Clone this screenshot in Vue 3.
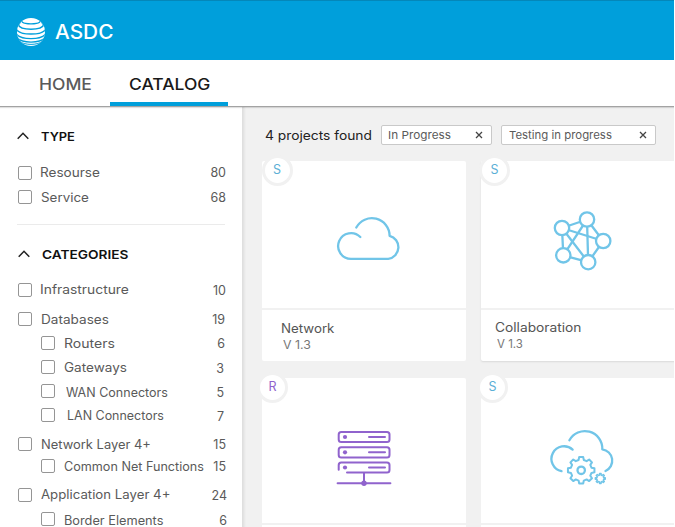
<script setup>
const types = [
  { label: 'Resourse', width: 59, x: 0, y: 0, count: '80', end: 0, cy: 0 },
  { label: 'Service', width: 47, x: 1, y: 1, count: '68', end: 0, cy: 1 },
]

const categories = [
  { label: 'Infrastructure', width: 88, x: 0, y: 0, count: '10', end: 0, cy: 1 },
  { label: 'Databases', width: 67, x: 1, y: 1, count: '19', end: 1, cy: 1, gap: 15 },
  { label: 'Routers', width: 50, x: 1, y: 1, count: '6', end: 1, cy: 1, child: true },
  { label: 'Gateways', width: 62, x: 1, y: 1, count: '3', end: 2, cy: 2, child: true },
  { label: 'WAN Connectors', width: 101, x: 3, y: 2, count: '5', end: 2, cy: 2, child: true },
  { label: 'LAN Connectors', width: 96, x: 4, y: 1, count: '7', end: 2, cy: 2, child: true },
  { label: 'Network Layer 4+', width: 109, x: 1, y: 1, count: '15', end: 0, cy: 1, gap: 15 },
  { label: 'Common Net Functions', width: 139, x: 1.5, y: 1, count: '15', end: 0, cy: 1, child: true, gap: 8 },
  { label: 'Application Layer 4+', width: 128.5, x: 1, y: 0, count: '24', end: -1, cy: 1, gap: 15 },
  { label: 'Border Elements', width: 98.5, x: 1, y: 2, count: '6', end: -1, cy: 2, child: true },
]

const cards = [
  { id: 'a', kind: 'S', icon: 'cloud', name: 'Network', nameWidth: 52.5, version: 'V 1.3', versionWidth: 27 },
  { id: 'b', kind: 'S', icon: 'mesh', name: 'Collaboration', nameWidth: 85.5, version: 'V 1.3', versionWidth: 25 },
  { id: 'c', kind: 'R', icon: 'server' },
  { id: 'd', kind: 'S', icon: 'service' },
]

const nodes = [[22, 28], [47, 19.5], [63.2, 41], [23.3, 55.3], [48.2, 62.2]]
const edges = [[0, 1], [0, 2], [0, 3], [0, 4], [1, 2], [1, 3], [1, 4], [2, 4], [3, 4]]

function gear(cx, cy, outer, inner) {
  const pts = []
  for (let i = 0; i < 8; i++) {
    const base = (i * Math.PI) / 4
    for (const [da, r] of [[-0.25, inner], [-0.15, outer], [0.15, outer], [0.25, inner]]) {
      pts.push(`${(cx + r * Math.cos(base + da)).toFixed(2)} ${(cy + r * Math.sin(base + da)).toFixed(2)}`)
    }
  }
  return `M${pts.join('L')}Z`
}

// Widens a line of text so that it spans the given width.
const vFit = {
  mounted(el, { value }) {
    const natural = el.getBoundingClientRect().width
    el.style.transform = `scaleX(${((value + 0.9) / natural).toFixed(4)})`
  },
}

const rowVars = (r) => ({
  '--gap': `${r.gap ?? 10}px`,
  '--lx': `${r.x}px`,
  '--ly': `${r.y}px`,
  '--end': `${r.end}px`,
  '--cy': `${r.cy}px`,
})
</script>

<template>
  <div class="app">
    <header class="brand">
      <svg class="globe" viewBox="0 0 28 28">
        <defs><clipPath id="ball"><circle cx="14" cy="14" r="14" /></clipPath></defs>
        <g clip-path="url(#ball)">
          <rect width="28" height="28" fill="#fff" />
          <g fill="none" stroke="#009fdb">
            <path d="M6 0C3 3.500 5 5.800 14 5.800S25 3.500 22 0" stroke-width="1.300" />
            <path d="M0 0H6L3 6L0 9ZM28 0H22L25 6L28 9Z" fill="#009fdb" stroke="none" />
            <path d="M1 6.500C3.500 12.800 24.500 12.800 27 6.500" stroke-width="1.500" />
            <path d="M-1 11C3 17.800 25 17.800 29 11" stroke-width="1.500" />
            <path d="M-1 15.500C3 22.300 25 22.300 29 15.500" stroke-width="1.400" />
            <path d="M0 19.800C5 25.500 23 25.500 28 19.800" stroke-width="1.300" />
            <path d="M3 23.600C8 27.300 20 27.300 25 23.600" stroke-width="1" />
          </g>
        </g>
      </svg>
      <span v-fit="57.5" class="fit brand-name">ASDC</span>
    </header>

    <nav class="tabs">
      <a class="tab home"><span v-fit="52" class="fit">HOME</span></a>
      <a class="tab active"><span v-fit="80.5" class="fit">CATALOG</span></a>
    </nav>

    <div class="body">
      <aside class="filters">
        <h2 class="heading">
          <svg class="chevron" viewBox="0 0 12 8"><path d="M.7 6.800 6 1.300l5.300 5.500" /></svg>
          <span v-fit="33" class="fit">TYPE</span>
        </h2>
        <div class="rows">
          <label v-for="r in types" :key="r.label" class="row" :style="rowVars(r)">
            <i class="box"></i>
            <span class="label"><span v-fit="r.width" class="fit">{{ r.label }}</span></span>
            <span class="count">{{ r.count }}</span>
          </label>
        </div>
        <hr class="rule" />
        <h2 class="heading categories-heading">
          <svg class="chevron" viewBox="0 0 12 8"><path d="M.7 6.800 6 1.300l5.300 5.500" /></svg>
          <span v-fit="85.5" class="fit">CATEGORIES</span>
        </h2>
        <div class="rows categories">
          <label v-for="r in categories" :key="r.label" class="row" :class="{ child: r.child }" :style="rowVars(r)">
            <i class="box"></i>
            <span class="label"><span v-fit="r.width" class="fit">{{ r.label }}</span></span>
            <span class="count">{{ r.count }}</span>
          </label>
        </div>
      </aside>

      <main class="content">
        <div class="summary">
          <div class="found"><span v-fit="106" class="fit">4 projects found</span></div>
          <div class="tag first">
            <span v-fit="62" class="fit">In Progress</span>
            <svg class="close" viewBox="0 0 8 8"><path d="M1 1l6 6M7 1 1 7" /></svg>
          </div>
          <div class="tag second">
            <span v-fit="102" class="fit">Testing in progress</span>
            <svg class="close" viewBox="0 0 8 8"><path d="M1 1l6 6M7 1 1 7" /></svg>
          </div>
        </div>

        <div class="grid">
          <article v-for="c in cards" :key="c.id" class="card" :class="'card-' + c.id">
            <span class="badge" :class="{ resource: c.kind === 'R' }">{{ c.kind }}</span>
            <div class="art">
              <svg v-if="c.icon === 'cloud'" class="icon" viewBox="0 0 90 80">
                <path d="M36.300 27.500A17.700 17.700 0 0 1 69.600 35.800A11.800 11.800 0 0 1 68.200 58.900H31A12.900 12.900 0 1 1 40.300 37" />
              </svg>
              <svg v-else-if="c.icon === 'mesh'" class="icon" viewBox="0 0 90 80">
                <line v-for="([a, b], i) in edges" :key="i" :x1="nodes[a][0]" :y1="nodes[a][1]" :x2="nodes[b][0]" :y2="nodes[b][1]" />
                <circle v-for="(n, i) in nodes" :key="'n' + i" class="node" :cx="n[0]" :cy="n[1]" r="7.2" />
              </svg>
              <svg v-else-if="c.icon === 'server'" class="icon purple" viewBox="0 0 90 80">
                <rect x="18.700" y="17" width="50.800" height="10" rx="2.500" />
                <rect x="18.700" y="32.300" width="50.800" height="10.200" rx="2.500" />
                <path d="M18.700 54.800V50a2.500 2.500 0 0 1 2.500-2.500H67a2.500 2.500 0 0 1 2.500 2.500V55.100a2.500 2.500 0 0 1-2.500 2.500H27M49 22H65M49 37.300H65M49 52.500H65M44 57.600V68M17.600 68.300H70.400" />
                <g class="solid">
                  <circle cx="25" cy="22" r="2.100" /><circle cx="25" cy="37.300" r="2.100" /><circle cx="25" cy="52.500" r="2.100" />
                  <circle cx="44" cy="68.300" r="2.700" />
                </g>
              </svg>
              <svg v-else class="icon" viewBox="0 0 90 80">
                <path d="M29.400 25.300A17.500 17.500 0 0 1 62.300 34.300A11.400 11.400 0 0 1 65.500 56M21.500 56.200A12.600 12.600 0 1 1 32.600 34.600" />
                <path class="gear" :d="gear(41.2, 55.3, 13.4, 10.6)" />
                <circle cx="41.200" cy="55.300" r="3.700" />
                <path class="gear small" :d="gear(60.3, 63.5, 5, 3.5)" />
              </svg>
            </div>
            <div class="info">
              <template v-if="c.name">
                <div class="name"><span v-fit="c.nameWidth" class="fit">{{ c.name }}</span></div>
                <div class="version"><span v-fit="c.versionWidth" class="fit">{{ c.version }}</span></div>
              </template>
            </div>
          </article>
        </div>
      </main>
    </div>
  </div>
</template>

<style>
body {
  background: #fff;
  overflow: hidden;
}
</style>

<style scoped>
.app {
  width: 674px;
  height: 527px;
  overflow: hidden;
  display: flex;
  flex-direction: column;
  font-family: Inter, "Liberation Sans", sans-serif;
  font-size: 12.5px;
  color: #5a5a5a;
  white-space: nowrap;
}
.app * { box-sizing: border-box; }
svg { display: block; flex: none; }
.fit { display: inline-block; transform-origin: 0 50%; }

.brand {
  flex: none;
  height: 60px;
  padding: 2px 0 0 17px;
  border-top: 1px solid #0487b9;
  background: #009fdb;
  display: flex;
  align-items: center;
}
.globe { width: 28px; height: 28px; }
.brand-name {
  margin-left: 10px;
  font-size: 19.5px;
  font-weight: 500;
  color: #fff;
}

.tabs {
  flex: none;
  height: 47px;
  padding-left: 38px;
  border-bottom: 1px solid #a3a3a3;
  background: #fff;
  display: flex;
  position: relative;
  box-shadow: 0 1px 1px rgba(0, 0, 0, .12);
}
.tab {
  height: 46px;
  padding-top: 15px;
  font-size: 15.7px;
  line-height: 20px;
  font-weight: 500;
}
.home { width: 72px; padding-left: .5px; }
.active {
  width: 118px;
  padding-left: 18.500px;
  border-bottom: 4px solid #009fdb;
  color: #191919;
}

.body { flex: 1; min-height: 0; display: flex; }
.filters {
  flex: none;
  width: 242px;
  padding: 22px 16px 0 17px;
  background: #fff;
}
.heading {
  margin: 0;
  height: 16px;
  display: flex;
  gap: 12px;
  font-size: 12.3px;
  line-height: 16px;
  font-weight: 600;
  color: #111;
}
.chevron { width: 12px; height: 8px; margin-top: 3px; fill: none; stroke: #222; stroke-width: 1.5; }
.rows { padding: 11px 0 0 1px; }
.categories { padding-top: 10px; }
.row {
  height: 14px;
  margin-top: var(--gap);
  display: flex;
  line-height: 14px;
}
.box {
  flex: none;
  width: 14px;
  height: 14px;
  border: 1px solid #959595;
  border-radius: 2px;
}
.child .box { margin-left: 23px; }
.label { padding-left: 7.500px; margin: var(--ly) 0 0 var(--lx); height: 14px; }
.count { margin: var(--cy) var(--end) 0 auto; height: 14px; }
.rule { height: 1px; margin: 20px 0 22px; border: 0; background: #ebebeb; width: 208px; }
.categories-heading { padding-left: 1px; }

.content {
  flex: 1;
  min-width: 0;
  padding: 18px 0 0 20px;
  background: #f1f1f1;
  box-shadow: inset 4px 0 3px -2px rgba(0, 0, 0, .09);
}
.summary { height: 20px; display: flex; }
.found { width: 119px; padding: 1px 0 0 2.500px; font-size: 12.8px; line-height: 20px; color: #222; }
.tag {
  height: 20px;
  padding: 0 8.500px 0 6px;
  border: 1px solid #c9c9c9;
  border-radius: 2px;
  background: #fff;
  display: flex;
  align-items: center;
  justify-content: space-between;
  font-size: 11px;
}
.first { width: 111px; }
.second { width: 155px; margin-left: 9px; padding-left: 7px; }
.close { width: 8px; height: 8px; fill: none; stroke: #444; stroke-width: 1.300; }

.grid {
  margin-top: 16px;
  display: grid;
  grid-template-columns: 204px 204px;
  grid-template-rows: 200px 200px;
  gap: 17px 15px;
}
.card { position: relative; border-radius: 2px; background: #fff; }
.card-b { box-shadow: 0 1px 2px rgba(0, 0, 0, .1); }
.badge {
  position: absolute;
  left: -.5px;
  top: -6px;
  width: 31px;
  height: 31px;
  border: 3px solid #f1f1f1;
  border-radius: 50%;
  background: #fff;
  display: flex;
  align-items: center;
  justify-content: center;
  font-size: 12.5px;
  line-height: 14px;
  color: #5bafd6;
}
.card-a .badge, .card-b .badge { padding-bottom: 1px; }
.card-b .badge { left: -2px; }
.card-c .badge { left: -5px; top: -6.500px; }
.card-d .badge { left: -4px; top: -6.500px; }
.badge.resource { color: #9063cd; }
.art { height: 147px; padding: 39px 0 0 58px; }
.card-b .art { padding-left: 59px; }
.card-c .art, .card-d .art { height: 145px; padding-top: 37px; }
.card-d .art { padding-left: 59px; }
.icon {
  width: 90px;
  height: 80px;
  fill: none;
  stroke: #71c5e8;
  stroke-width: 2.300;
  stroke-linecap: round;
  stroke-linejoin: round;
}
.purple { stroke: #9063cd; stroke-width: 2; }
.solid { fill: #9063cd; stroke: none; }
.node { fill: #fff; }
.gear { stroke-width: 2; }
.small { stroke-width: 1.500; }
.info { border-top: 2px solid #f1f1f1; padding: 11px 0 0 19px; }
.name { height: 16px; font-size: 12.8px; line-height: 16px; color: #555; }
.version { padding-left: 2px; height: 16px; font-size: 11.6px; line-height: 16px; color: #777; }
.card-b .info { padding: 10px 0 0 13.500px; }
</style>
